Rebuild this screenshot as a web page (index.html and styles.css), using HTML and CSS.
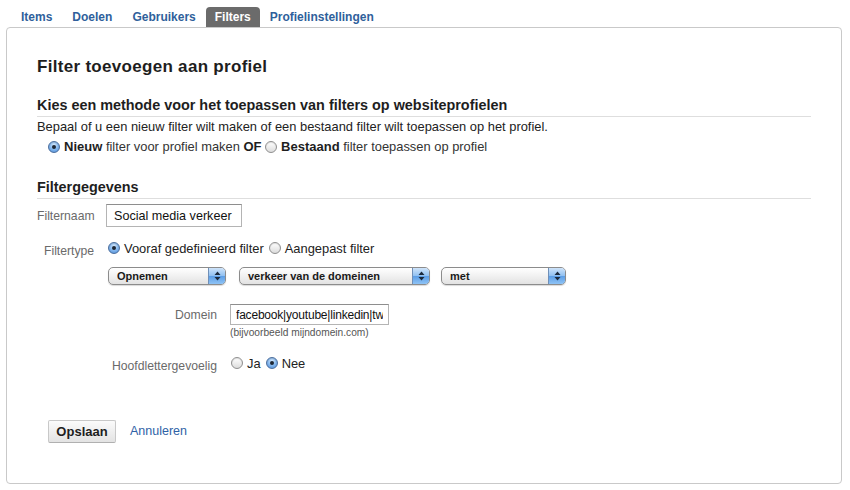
FILE: index.html
```html
<!DOCTYPE html>
<html lang="nl">
<head>
<meta charset="utf-8">
<title>Filter toevoegen aan profiel</title>
<link rel="stylesheet" href="styles.css">
</head>
<body>
<nav class="tabs">
  <a class="tab" href="#">Items</a>
  <a class="tab" href="#">Doelen</a>
  <a class="tab" href="#">Gebruikers</a>
  <a class="tab tab-active" href="#">Filters</a>
  <a class="tab" href="#">Profielinstellingen</a>
</nav>

<main class="panel">
  <h1 class="title">Filter toevoegen aan profiel</h1>

  <h2 class="section">Kies een methode voor het toepassen van filters op websiteprofielen</h2>
  <p class="intro">Bepaal of u een nieuw filter wilt maken of een bestaand filter wilt toepassen op het profiel.</p>
  <div class="method"><span class="radio radio-on"></span><b class="strong">Nieuw</b> filter voor profiel maken <b class="strong">OF</b> <span class="radio"></span><b class="strong">Bestaand</b> filter toepassen op profiel</div>

  <h2 class="section section-details">Filtergegevens</h2>

  <div class="row row-name">
    <span class="label label-name">Filternaam</span>
    <input class="text-input input-name" type="text" value="Social media verkeer">
  </div>

  <div class="row row-type">
    <span class="label label-type">Filtertype</span>
    <span class="choice"><span class="radio radio-on"></span>Vooraf gedefinieerd filter</span>
    <span class="choice"><span class="radio"></span>Aangepast filter</span>
  </div>

  <div class="row row-selects">
    <div class="select select-mode"><span class="select-text">Opnemen</span><span class="select-arrow"><svg width="7" height="10" viewBox="0 0 7 10"><path d="M3.5 0.5 L6.5 4 L0.5 4 Z M0.5 6 L6.5 6 L3.5 9.5 Z" fill="#1c2a3c"/></svg></span></div>
    <div class="select select-field"><span class="select-text">verkeer van de domeinen</span><span class="select-arrow"><svg width="7" height="10" viewBox="0 0 7 10"><path d="M3.5 0.5 L6.5 4 L0.5 4 Z M0.5 6 L6.5 6 L3.5 9.5 Z" fill="#1c2a3c"/></svg></span></div>
    <div class="select select-match"><span class="select-text">met</span><span class="select-arrow"><svg width="7" height="10" viewBox="0 0 7 10"><path d="M3.5 0.5 L6.5 4 L0.5 4 Z M0.5 6 L6.5 6 L3.5 9.5 Z" fill="#1c2a3c"/></svg></span></div>
  </div>

  <div class="row row-domain">
    <span class="label label-wide">Domein</span>
    <input class="text-input input-domain" type="text" value="facebook|youtube|linkedin|twitter">
  </div>
  <div class="hint">(bijvoorbeeld mijndomein.com)</div>

  <div class="row row-case">
    <span class="label label-wide label-case">Hoofdlettergevoelig</span>
    <span class="choice"><span class="radio"></span>Ja</span>
    <span class="choice"><span class="radio radio-on"></span>Nee</span>
  </div>

  <div class="actions">
    <button class="button" type="button">Opslaan</button>
    <a class="link" href="#">Annuleren</a>
  </div>
</main>
</body>
</html>
```

FILE: styles.css
```css
html, body {
  margin: 0;
  padding: 0;
  background: #ffffff;
}

body {
  font-family: "Liberation Sans", Arial, sans-serif;
  color: #222222;
  width: 850px;
  height: 490px;
  overflow: hidden;
}

/* top tab strip */
.tabs {
  display: flex;
  height: 20px;
  padding: 7px 0 0 11px;
}

.tab {
  display: block;
  padding: 0 10px;
  line-height: 21px;
  font-size: 12px;
  font-weight: bold;
  color: #2f5f9b;
  text-decoration: none;
}

.tab-active {
  background: #6b6b6b;
  color: #ffffff;
  border-radius: 4px 4px 0 0;
  padding: 0 9px;
}

/* main box */
.panel {
  box-sizing: border-box;
  width: 836px;
  height: 457px;
  margin-left: 6px;
  border: 1px solid #c9c9c9;
  border-radius: 4px;
  padding: 28px 30px 0 30px;
  background: #ffffff;
}

.title {
  margin: 0;
  font-size: 17px;
  line-height: 22px;
  letter-spacing: 0.3px;
  color: #1e1e1e;
}

.section {
  margin: 18px 0 0 0;
  padding-bottom: 2px;
  border-bottom: 1px solid #dedede;
  font-size: 14.4px;
  line-height: 18px;
  color: #1e1e1e;
}

.section-details {
  margin-top: 22px;
}

.intro {
  margin: 2px 0 0 0;
  font-size: 12.9px;
  line-height: 16px;
  color: #222222;
}

.method {
  margin-top: 3px;
  padding-left: 11px;
  font-size: 12.9px;
  line-height: 18px;
  height: 18px;
  white-space: nowrap;
  color: #333333;
}

.strong {
  font-size: 13px;
  color: #1e1e1e;
}

/* aqua-style radio buttons */
.radio {
  box-sizing: border-box;
  display: inline-block;
  flex: none;
  position: relative;
  width: 12px;
  height: 12px;
  margin-right: 4px;
  vertical-align: -2px;
  border-radius: 50%;
  border: 1px solid #8f8f8f;
  background: linear-gradient(#ffffff, #dcdcdc);
  box-shadow: inset 0 1px 1px rgba(0, 0, 0, 0.12);
}

.radio-on {
  border-color: #4b6e9e;
  background: radial-gradient(circle at 50% 30%, #d4e8fb 0%, #8dbdf0 45%, #4a8ad6 100%);
}

.radio-on::after {
  content: "";
  position: absolute;
  left: 3px;
  top: 3px;
  width: 4px;
  height: 4px;
  border-radius: 50%;
  background: #1d2633;
}

/* form rows */
.row {
  display: flex;
  align-items: center;
}

.label {
  flex: none;
  font-size: 12.2px;
  color: #6a6a6a;
}

.row-name {
  margin-top: 5px;
}

.label-name {
  width: 69px;
}

.text-input {
  box-sizing: border-box;
  margin: 0;
  font-family: "Liberation Sans", Arial, sans-serif;
  font-size: 12.6px;
  color: #111111;
  background: #ffffff;
  border: 1px solid #b4b4b4;
  border-top-color: #8e8e8e;
  outline: none;
}

.input-name {
  width: 136px;
  height: 23px;
  padding: 0 7px;
}

.row-type {
  margin-top: 12px;
  height: 18px;
}

.label-type {
  width: 64px;
  padding-left: 7px;
  padding-top: 5px;
}

.choice {
  display: flex;
  align-items: center;
  font-size: 12.9px;
  color: #222222;
  margin-right: 5px;
}

/* aqua-style pop-up menus */
.row-selects {
  margin-top: 10px;
  padding-left: 71px;
  gap: 13px;
}

.select {
  box-sizing: border-box;
  display: flex;
  align-items: stretch;
  height: 18px;
  border: 1px solid #8c8c8c;
  border-radius: 5px;
  background: linear-gradient(#ffffff 0%, #f1f1f1 50%, #e2e2e2 100%);
  box-shadow: 0 1px 1px rgba(0, 0, 0, 0.15);
  overflow: hidden;
}

.select-text {
  flex: 1;
  padding-left: 8px;
  font-size: 11px;
  font-weight: bold;
  line-height: 16px;
  color: #1a1a1a;
}

.select-arrow {
  display: flex;
  align-items: center;
  justify-content: center;
  width: 16px;
  border-left: 1px solid #6f8fb8;
  background: linear-gradient(#cfe4fa 0%, #8fc0f1 50%, #5b9de6 51%, #8ec3f5 100%);
}

.select-mode {
  width: 118px;
}

.select-field {
  width: 191px;
}

.select-match {
  width: 125px;
  margin-left: -2px;
}

.row-domain {
  margin-top: 19px;
}

.label-wide {
  width: 180px;
  text-align: right;
  margin-right: 13px;
}

.input-domain {
  width: 159px;
  height: 21px;
  padding: 0 5px;
  font-size: 12px;
  letter-spacing: -0.2px;
}

.hint {
  margin: 1px 0 0 193px;
  font-size: 10.2px;
  line-height: 13px;
  color: #555555;
}

.row-case {
  margin-top: 15px;
  height: 18px;
}

.label-case {
  padding-top: 6px;
  margin-right: 14px;
}

/* footer actions */
.actions {
  display: flex;
  align-items: center;
  gap: 14px;
  margin-top: 48px;
  padding-left: 11px;
}

.button {
  box-sizing: border-box;
  width: 68px;
  height: 23px;
  margin: 0;
  padding: 0;
  font-family: "Liberation Sans", Arial, sans-serif;
  font-size: 13px;
  font-weight: bold;
  color: #1e1e1e;
  border: 1px solid #c8c8c8;
  border-bottom-color: #b0b0b0;
  border-radius: 2px;
  background: linear-gradient(#fbfbfb, #e3e3e3);
}

.link {
  font-size: 12.5px;
  color: #2f62a6;
  text-decoration: none;
  margin-top: -1px;
}
```
